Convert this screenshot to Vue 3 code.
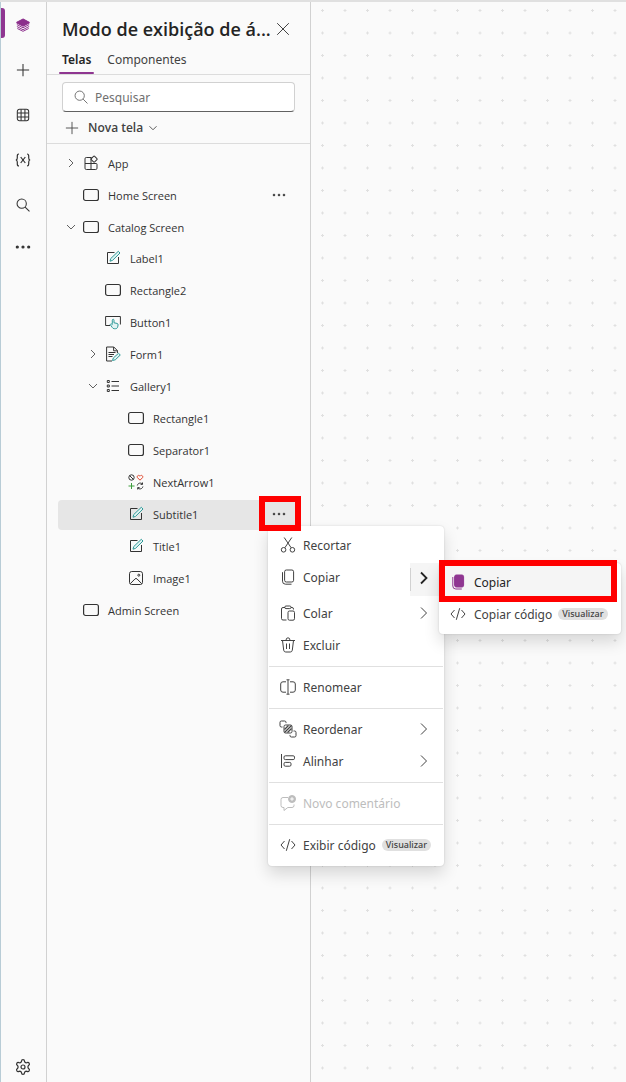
<script setup>
import { ref } from 'vue'

const icons = {
  layers:
    '<path class="solid" d="M8 1.2l6.800 3.500c.5.3.5.7 0 1L8 9.200 1.200 5.700c-.5-.3-.5-.7 0-1z"/><path d="M1 7.500l7 3.700 7-3.700M1 9.700l7 3.700 7-3.700M1.500 12l6.500 3.200L14.500 12" stroke-width="1.100"/>',
  plus: '<path d="M8 1v14M1 8h14"/>',
  table: '<rect x="1.500" y="1.500" width="13" height="13" rx="2.500"/><path d="M5.800 1.500v13M10.200 1.500v13M1.500 5.800h13M1.500 10.200h13"/>',
  variable:
    '<path d="M4 2C2.500 2 2.300 2.800 2.300 4v2c0 1.200-.5 2-1.500 2 1 0 1.500.8 1.500 2v2c0 1.200.2 2 1.700 2M12 2c1.500 0 1.700.8 1.700 2v2c0 1.200.5 2 1.500 2-1 0-1.500.8-1.500 2v2c0 1.200-.2 2-1.700 2M5.700 5l4.600 6M10.300 5l-4.600 6"/>',
  search: '<circle cx="6.500" cy="6.500" r="5.300"/><path d="M10.400 10.400l5 5"/>',
  more: '<circle class="solid" cx="2.300" cy="8" r="1"/><circle class="solid" cx="8" cy="8" r="1"/><circle class="solid" cx="13.700" cy="8" r="1"/>',
  settings:
    '<circle cx="8" cy="8" r="2"/><path d="M6.500 2.300Q6.500.7 8 .7t1.500 1.600l.3.8 1.200.7 1-.2q1.500-.6 2.200.7t-.6 2.200l-.6.8v1.400l.6.8q1.300.9.6 2.200t-2.200.7l-1-.2-1.200.7-.3.8Q9.500 15.300 8 15.300t-1.500-1.600l-.3-.8-1.200-.7-1 .2q-1.500.6-2.200-.7t.6-2.200L3 8.700V7.300l-.6-.8q-1.300-.9-.6-2.200T4 3.600l1 .2 1.200-.7z"/>',
  close: '<path d="M2.200 2.200l11.600 11.600M13.800 2.200L2.200 13.800"/>',
  down: '<path d="M4 6l4 4 4-4"/>',
  right: '<path d="M6 4l4 4-4 4"/>',
  bigRight: '<path d="M5 2.500L10.500 8 5 13.500"/>',
  app: '<path d="M8.500 2.500H3.300q-1.300 0-1.300 1.300v9.400q0 1.300 1.300 1.300h9.400q1.300 0 1.300-1.300V9.300q0-.8-.8-.8H2M8 2.500v12"/><rect x="8.700" y="1.700" width="4.800" height="4.800" rx="0.800" transform="rotate(45 11.100 4.100)"/>',
  screen: '<rect x="0.600" y="2.500" width="14.800" height="11" rx="2" stroke-width="1.200"/>',
  label:
    '<path d="M9.500 2.500H2.500v11h11V7"/><path class="teal pale" d="M5 11.200l.7-2.600 7.600-7.300 1.700 1.700-7.500 7.400z"/>',
  button:
    '<path d="M5 11.500H.6v-9h14.800v8"/><path class="teal pale" d="M7.300 9.800V6.200c0-1.300 1.700-1.300 1.700 0v2.600l3 .6c.8.2 1.200.7 1.100 1.500l-.4 2c-.3 1.200-1 1.800-2.200 1.800H9.300c-1 0-1.500-.4-2-1.200L5.200 10.600c.4-.9 1.300-1 2.100-.1z"/>',
  form: '<path d="M7 15H1.600V1h7.200l3.600 3.600V7M8.600 1v3.800h3.800M3.500 6.500h7M3.500 8.500h5.500M3.500 10.500h4"/><path class="teal pale" d="M7.500 14.500l.8-2.500 5.200-4.700 1.800 1.700-5 4.800z"/>',
  gallery:
    '<path d="M6.500 3.500h7.500M6.500 8h7.500M6.500 12.500h7.500"/><path d="M2.300 2.500h2v2h-2zM2.300 7h2v2h-2zM2.300 11.500h2v2h-2z"/>',
  shapes:
    '<circle cx="3.500" cy="3.500" r="2.700"/><path d="M1.700 1.700l3.600 3.600"/><path class="red" d="M12 6.200L9.500 3.700C8.400 2.300 10.500.2 12 2.200c1.500-2 3.600.1 2.500 1.500z"/><path class="green" d="M3.500 9v6M.5 12h6"/><path d="M9.300 11.500c.5-2.600 3.700-3.200 5.200-1.300V8.500m0 1.900h-1.900M14.900 12.500c-.5 2.600-3.700 3.200-5.200 1.300v1.700m0-1.900h1.900"/>',
  image:
    '<rect x="1.500" y="1.500" width="13" height="13" rx="2.200"/><circle cx="10.800" cy="5.200" r="1"/><path d="M2.300 13.700L7 8.900q1-.9 2 0l4.700 4.800"/>',
  cut: '<circle cx="3.600" cy="12.800" r="2.300"/><circle cx="12.400" cy="12.800" r="2.300"/><path d="M4.800 10.800L11.800.5M11.200 10.800L4.200.5"/>',
  copy: '<rect x="4.600" y="1" width="9" height="12" rx="1.700"/><path d="M2.500 3.200v9q0 3 3 3h6"/>',
  copyFilled:
    '<rect class="solid" x="4.600" y="1" width="9" height="12" rx="1.700"/><path d="M2.800 3v9q0 3 3 3h6"/>',
  paste:
    '<path d="M5 2.500H3Q1.500 2.500 1.500 4v9.500q0 1.500 1.500 1.500h3.500M11 2.500h1Q13.500 2.500 13.500 4v.5"/><rect x="4.800" y="1" width="6.200" height="2.600" rx="1.200"/><rect x="8" y="6" width="6.500" height="9.200" rx="1.500"/>',
  trash:
    '<path d="M1 3.500h14M6 3.300q0-2.500 2-2.500t2 2.500M2.500 3.500l1.200 9.700Q4 15 5.700 15h4.600q1.700 0 2-1.800l1.200-9.700M6.500 6.500v5.500M9.500 6.500v5.500"/>',
  rename:
    '<path d="M6 2.800H3Q.7 2.800.7 5v6q0 2.200 2.300 2.200h3M10 2.800h3q2.300 0 2.300 2.200v6q0 2.200-2.300 2.200h-3M8 1v14M6.500.8h3M6.500 15.200h3"/>',
  reorder:
    '<rect x="4" y="4" width="8" height="8" rx="1.500"/><path d="M4.500 8.500l4-4M4.500 11.500l7-7M7.500 11.500l4-4" stroke-width="1.300"/><path d="M2.500 6H1.400Q0 6 0 4.600V1.400Q0 0 1.400 0h3.200Q6 0 6 1.400v.7M13.500 10h1.100q1.400 0 1.400 1.400v3.200q0 1.400-1.400 1.400h-3.200q-1.400 0-1.400-1.400v-.7"/>',
  align:
    '<path d="M1.500 1v14"/><rect x="4" y="2.800" width="10.500" height="3.800" rx="1.300"/><rect x="4" y="9.400" width="7" height="3.800" rx="1.300"/>',
  comment:
    '<path d="M8 2.500H3Q1 2.500 1 4.500v6q0 2 2 2h1v3l3.800-3H12q2 0 2-2V9.500"/><circle class="solid" cx="12" cy="4" r="3.500"/><path class="cutout" d="M12 2.200v3.600M10.200 4h3.600"/>',
  code: '<path d="M4.500 4L1 8l3.500 4M11.500 4L15 8l-3.500 4M9.700 2.200L6.300 13.800"/>'
}

const rail = [
  { icon: 'layers', name: 'Modo de exibição de árvore', active: true },
  { icon: 'plus', name: 'Inserir' },
  { icon: 'table', name: 'Dados' },
  { icon: 'variable', name: 'Variáveis', large: true },
  { icon: 'search', name: 'Pesquisar' },
  { icon: 'more', name: 'Mais', large: true, short: true }
]

const tree = [
  { name: 'App', icon: 'app', level: 0, arrow: 'right' },
  { name: 'Home Screen', icon: 'screen', level: 0, more: true },
  { name: 'Catalog Screen', icon: 'screen', level: 0, arrow: 'down' },
  { name: 'Label1', icon: 'label', level: 1 },
  { name: 'Rectangle2', icon: 'screen', level: 1 },
  { name: 'Button1', icon: 'button', level: 1 },
  { name: 'Form1', icon: 'form', level: 1, arrow: 'right' },
  { name: 'Gallery1', icon: 'gallery', level: 1, arrow: 'down' },
  { name: 'Rectangle1', icon: 'screen', level: 2 },
  { name: 'Separator1', icon: 'screen', level: 2 },
  { name: 'NextArrow1', icon: 'shapes', level: 2 },
  { name: 'Subtitle1', icon: 'label', level: 2, more: true, selected: true },
  { name: 'Title1', icon: 'label', level: 2 },
  { name: 'Image1', icon: 'image', level: 2 },
  { name: 'Admin Screen', icon: 'screen', level: 0 }
]

const menuGroups = [
  [
    { name: 'Recortar', icon: 'cut' },
    { name: 'Copiar', icon: 'copy', sub: true, open: true },
    { name: 'Colar', icon: 'paste', sub: true },
    { name: 'Excluir', icon: 'trash' }
  ],
  [{ name: 'Renomear', icon: 'rename' }],
  [
    { name: 'Reordenar', icon: 'reorder', sub: true },
    { name: 'Alinhar', icon: 'align', sub: true }
  ],
  [{ name: 'Novo comentário', icon: 'comment', disabled: true }],
  [{ name: 'Exibir código', icon: 'code', badge: 'Visualizar' }]
]

const query = ref('')
</script>

<template>
  <div class="studio">
    <nav class="rail">
      <button
        v-for="item in rail"
        :key="item.icon"
        class="rail-item"
        :class="{ active: item.active, short: item.short, large: item.large }"
        :aria-label="item.name"
      >
        <svg class="icon" viewBox="0 0 16 16" v-html="icons[item.icon]"></svg>
      </button>
      <button class="rail-item large bottom" aria-label="Configurações">
        <svg class="icon" viewBox="0 0 16 16" v-html="icons.settings"></svg>
      </button>
    </nav>

    <aside class="panel">
      <header class="heading">
        <h1>Modo de exibição de á...</h1>
        <button class="close" aria-label="Fechar">
          <svg class="icon" viewBox="0 0 16 16" v-html="icons.close"></svg>
        </button>
      </header>
      <div class="tabs" role="tablist">
        <button class="tab current" role="tab" aria-selected="true">Telas</button>
        <button class="tab" role="tab" aria-selected="false">Componentes</button>
      </div>
      <div class="tools">
        <label class="search">
          <svg class="icon" viewBox="0 0 16 16" v-html="icons.search"></svg>
          <input v-model="query" type="text" placeholder="Pesquisar" aria-label="Pesquisar" />
        </label>
        <button class="new-screen">
          <svg class="icon" viewBox="0 0 16 16" v-html="icons.plus"></svg>
          <span>Nova tela</span>
          <svg class="icon tiny" viewBox="0 0 16 16" v-html="icons.down"></svg>
        </button>
      </div>
      <ul class="tree">
        <li
          v-for="node in tree"
          :key="node.name"
          class="node"
          :class="['level-' + node.level, { selected: node.selected }]"
        >
          <button v-if="node.arrow" class="arrow" :aria-label="'Alternar ' + node.name">
            <svg class="icon" viewBox="0 0 16 16" v-html="icons[node.arrow]"></svg>
          </button>
          <span v-else class="arrow"></span>
          <button class="name">
            <svg class="icon" viewBox="0 0 16 16" v-html="icons[node.icon]"></svg>
            <span>{{ node.name }}</span>
          </button>
          <button v-if="node.more" class="more" :aria-label="'Mais ações para ' + node.name">
            <svg class="icon" viewBox="0 0 16 16" v-html="icons.more"></svg>
          </button>
        </li>
      </ul>
    </aside>

    <main class="canvas">
      <svg class="grid" aria-hidden="true">
        <defs>
          <pattern id="dots" x="0" y="-3" width="45" height="45" patternUnits="userSpaceOnUse">
            <path
              d="M10 11.500h3M11.500 10v3M32.500 11.500h3M34 10v3M10 34h3M11.500 32.500v3M32.500 34h3M34 32.500v3"
              stroke="#e0e0e0"
            />
          </pattern>
        </defs>
        <rect width="100%" height="100%" fill="url(#dots)" />
      </svg>
    </main>

    <div class="menu main-menu" role="menu">
      <div v-for="(group, g) in menuGroups" :key="g" class="group">
        <div v-for="item in group" :key="item.name" class="entry" :class="{ open: item.open }">
          <button class="item" role="menuitem" :disabled="item.disabled">
            <svg class="icon" viewBox="0 0 16 16" v-html="icons[item.icon]"></svg>
            <span>{{ item.name }}</span>
            <span v-if="item.badge" class="badge">{{ item.badge }}</span>
          </button>
          <button v-if="item.sub" class="expand" :aria-label="'Abrir ' + item.name">
            <svg class="icon" viewBox="0 0 16 16" v-html="icons.bigRight"></svg>
          </button>
        </div>
      </div>
    </div>

    <div class="menu sub-menu" role="menu">
      <button class="item hovered" role="menuitem">
        <svg class="icon purple" viewBox="0 0 16 16" v-html="icons.copyFilled"></svg>
        <span>Copiar</span>
      </button>
      <button class="item" role="menuitem">
        <svg class="icon" viewBox="0 0 16 16" v-html="icons.code"></svg>
        <span>Copiar código</span>
        <span class="badge">Visualizar</span>
      </button>
    </div>

    <div class="mark mark-more"></div>
    <div class="mark mark-copy"></div>
  </div>
</template>

<style>
body {
  background: #fafafa;
}
</style>

<style scoped>
.studio {
  position: relative;
  display: flex;
  box-sizing: border-box;
  min-height: 100vh;
  overflow: hidden;
  border-top: 2px solid #e0e0e0;
  background: #fafafa;
  color: #333;
  font-family: "Open Sans", "Noto Sans", sans-serif;
  font-size: 12px;
}
.studio * {
  box-sizing: border-box;
}
button {
  display: flex;
  align-items: center;
  margin: 0;
  padding: 0;
  border: 0;
  background: none;
  color: inherit;
  font: inherit;
  white-space: nowrap;
}
.icon {
  flex: none;
  width: 16px;
  height: 16px;
  fill: none;
  stroke: currentColor;
  stroke-width: 1;
  overflow: visible;
}
.icon :deep(.solid) {
  fill: currentColor;
}
.icon :deep(.teal) {
  stroke: #2f9a98;
}
.icon :deep(.pale) {
  fill: #e2f3f3;
}
.icon :deep(.red) {
  stroke: #e0442a;
}
.icon :deep(.green) {
  stroke: #3c9c3c;
}
.icon :deep(.cutout) {
  stroke: #fff;
}

.rail {
  display: flex;
  flex: none;
  flex-direction: column;
  width: 47px;
  border-left: 1px solid #b8ccd6;
  border-right: 1px solid #d1d1d1;
}
.rail-item {
  position: relative;
  justify-content: center;
  height: 45px;
  padding-right: 1px;
  color: #333;
}
.rail-item .icon {
  width: 14px;
  height: 14px;
  stroke-width: 1.2;
}
.rail-item.large .icon {
  width: 16px;
  height: 16px;
}
.rail-item.short {
  height: 40px;
}
.rail-item.active {
  color: #8c2f8c;
}
.rail-item.active::before {
  content: "";
  position: absolute;
  top: 6px;
  left: 0;
  width: 4px;
  height: 30px;
  border-radius: 0 3px 3px 0;
  background: #8f3691;
}
.rail-item.bottom {
  height: 30px;
  margin-top: auto;
}

.panel {
  flex: none;
  width: 264px;
  border-right: 1px solid #d1d1d1;
}
.heading {
  display: flex;
  align-items: center;
  height: 46px;
  padding: 8px 19px 0 15px;
}
h1 {
  flex: 1;
  margin: 0;
  color: #242424;
  font-size: 18px;
  font-weight: 600;
  line-height: 24px;
  white-space: nowrap;
}
.close {
  color: #424242;
}
.tabs {
  display: flex;
  gap: 10px;
  height: 27px;
  padding-left: 12px;
  border-bottom: 1px solid #dcdcdc;
  font-family: "Noto Sans", "Open Sans", sans-serif;
}
.tab {
  position: relative;
  height: 26px;
  padding: 0 3px 4px;
  color: #424242;
}
.tab.current {
  color: #242424;
  font-weight: 600;
}
.tab.current::after {
  content: "";
  position: absolute;
  right: 0;
  bottom: 0;
  left: 0;
  height: 2px;
  border-radius: 2px;
  background: #8f3691;
}
.tools {
  height: 69px;
  padding: 7px 15px 0;
  border-bottom: 1px solid #dcdcdc;
}
.search {
  display: flex;
  align-items: center;
  gap: 7px;
  height: 30px;
  padding-left: 11px;
  border: 1px solid #d1d1d1;
  border-bottom-color: #616161;
  border-radius: 4px;
  background: #fff;
  color: #616161;
}
.search .icon,
.new-screen .icon {
  width: 14px;
  height: 14px;
}
.search input {
  flex: 1;
  min-width: 0;
  padding: 0;
  border: 0;
  outline: 0;
  background: none;
  color: #333;
  font-family: "Noto Sans", "Open Sans", sans-serif;
  font-size: 12px;
}
.search input::placeholder {
  color: #707070;
  opacity: 1;
}
.new-screen {
  gap: 9px;
  height: 31px;
  padding-left: 3px;
  color: #424242;
  font-weight: 600;
}
.new-screen .icon.tiny {
  width: 14px;
  height: 14px;
  margin-left: -6px;
}

.tree {
  display: flex;
  flex-direction: column;
  gap: 2px;
  margin: 0;
  padding: 5px 10px 0 11px;
  list-style: none;
}
.node {
  display: flex;
  align-items: center;
  height: 30px;
  padding-bottom: 2px;
  border-radius: 4px;
}
.level-0 + .level-1 {
  margin-top: -1px;
}
.level-1 {
  padding-left: 22px;
}
.level-2 {
  padding-left: 45px;
}
.node.selected {
  background: #e6e6e6;
}
.arrow {
  flex: none;
  justify-content: center;
  width: 25px;
  height: 28px;
  color: #616161;
}
.name {
  flex: 1;
  gap: 9px;
  height: 28px;
  font-size: 11px;
}
.more {
  flex: none;
  justify-content: center;
  width: 42px;
  height: 28px;
}
.more .icon {
  width: 14px;
  height: 14px;
}

.canvas {
  flex: 1;
  min-width: 0;
}
.grid {
  display: block;
  width: 100%;
  height: 100%;
}

.menu {
  position: absolute;
  border-radius: 4px;
  background: #fff;
  box-shadow: 0 0 2px rgba(0, 0, 0, 0.16), 0 8px 16px rgba(0, 0, 0, 0.14);
  color: #424242;
  font-family: "Noto Sans", "Open Sans", sans-serif;
}
.main-menu {
  top: 524px;
  left: 268px;
  width: 176px;
  padding: 3px 1px 5px;
}
.group + .group {
  margin-top: 5px;
  padding-top: 4px;
  border-top: 1px solid #e0e0e0;
}
.entry {
  display: flex;
}
.item {
  flex: 1;
  gap: 7px;
  height: 32px;
  padding-left: 11px;
}
.item:disabled {
  color: #bdbdbd;
}
.expand {
  justify-content: center;
  width: 38px;
}
.entry.open {
  height: 36px;
}
.entry.open .expand {
  position: relative;
  width: 33px;
  height: 33px;
  margin-top: 2px;
  padding: 0 6px 4px 0;
  background: #f5f5f5;
  color: #242424;
}
.entry.open .expand::before {
  content: "";
  position: absolute;
  top: 5px;
  bottom: 5px;
  left: 0;
  border-left: 1px solid #d1d1d1;
}
.entry.open .expand .icon {
  stroke-width: 1.8;
}
.badge {
  height: 12px;
  margin-left: -1px;
  padding: 0 4px;
  border-radius: 6px;
  background: #e0e0e0;
  color: #424242;
  font-size: 9px;
  font-weight: 500;
  line-height: 12px;
}
.sub-menu {
  top: 561px;
  left: 439px;
  width: 182px;
  padding: 3px 4px 4px;
}
.sub-menu .item {
  width: 100%;
  padding-left: 8px;
}
.sub-menu .icon {
  margin-left: -1px;
  margin-right: 1px;
}
.item.hovered {
  background: #f5f5f5;
  color: #242424;
}
.purple {
  color: #8f3691;
}

.mark {
  position: absolute;
  border: 6px solid #f00;
  pointer-events: none;
}
.mark-more {
  top: 494px;
  left: 259px;
  width: 42px;
  height: 35px;
}
.mark-copy {
  top: 558px;
  left: 439px;
  width: 178px;
  height: 42px;
}
</style>
